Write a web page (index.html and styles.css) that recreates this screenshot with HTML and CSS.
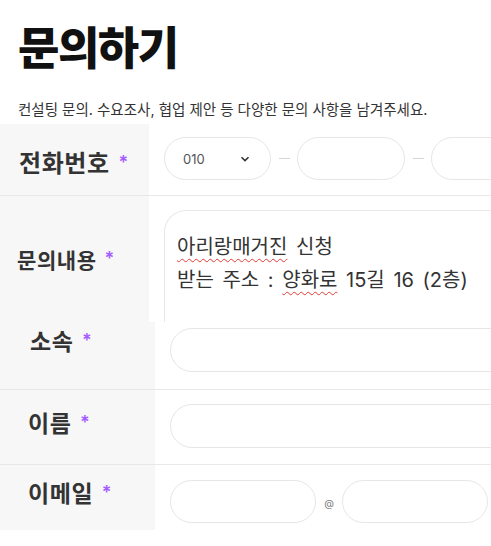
FILE: index.html
```html
<!DOCTYPE html>
<html lang="ko">
<head>
    <meta charset="UTF-8">
    <meta name="viewport" content="width=device-width, initial-scale=1.0">
    <title>문의하기</title>
    <link rel="stylesheet" href="styles.css">
</head>
<body>
    <div class="page-head">
        <h1>문의하기</h1>
        <p class="lead">컨설팅 문의. 수요조사, 협업 제안 등 다양한 문의 사항을 남겨주세요.</p>
    </div>

    <div class="form">
        <div class="row row-phone">
            <div class="label">전화번호 <span class="req">*</span></div>
            <div class="field">
                <div class="pill select">
                    <span>010</span>
                    <svg width="10" height="6" viewBox="0 0 10 6"><path d="M1.5 1.2 L5 4.6 L8.5 1.2" fill="none" stroke="#333" stroke-width="1.6"/></svg>
                </div>
                <span class="dash"></span>
                <div class="pill phone-part"></div>
                <span class="dash"></span>
                <div class="pill phone-part"></div>
            </div>
        </div>

        <div class="row row-message">
            <div class="label">문의내용 <span class="req">*</span></div>
            <div class="field">
                <div class="textarea">
                    <div><span class="typo">아리랑매거진</span> 신청</div>
                    <div>받는 주소 : <span class="typo">양화로</span> 15길 16 (2층)</div>
                </div>
            </div>
        </div>

        <div class="row row-org">
            <div class="label">소속 <span class="req">*</span></div>
            <div class="field">
                <div class="pill wide"></div>
            </div>
        </div>

        <div class="row row-name">
            <div class="label">이름 <span class="req">*</span></div>
            <div class="field">
                <div class="pill wide"></div>
            </div>
        </div>

        <div class="row row-mail">
            <div class="label">이메일 <span class="req">*</span></div>
            <div class="field">
                <div class="pill mail-part"></div>
                <span class="at">@</span>
                <div class="pill mail-part"></div>
            </div>
        </div>
    </div>
</body>
</html>
```

FILE: styles.css
```css
body {
    margin: 0;
    background: #fff;
    color: #333;
    font-family: Inter, "Noto Sans CJK KR", sans-serif;
    overflow: hidden;
}
.page-head {
    padding: 22px 0 0 18px;
}
h1 {
    margin: 0;
    font-size: 45px;
    line-height: 54px;
    font-weight: 900;
    color: #111;
    letter-spacing: -1.5px;
}
.lead {
    margin: 24px 0 4px;
    font-size: 14.5px;
    line-height: 20px;
    letter-spacing: 0;
    color: #333;
}
.row {
    display: flex;
    border-bottom: 1px solid #e8e8e8;
}
.label {
    flex: 0 0 149px;
    background: #f7f7f7;
    box-sizing: border-box;
    font-size: 23px;
    line-height: 28px;
    font-weight: 600;
    letter-spacing: 0.6px;
    color: #333;
    white-space: nowrap;
}
.req {
    color: #a45cff;
    font-size: 18px;
    vertical-align: 3px;
    margin-left: 2px;
}
.field {
    display: flex;
    align-items: center;
    white-space: nowrap;
    box-sizing: border-box;
}
.pill {
    flex: none;
    box-sizing: border-box;
    height: 44px;
    border: 1px solid #e6e6e6;
    border-radius: 22px;
    background: #fff;
}

/* 전화번호 */
.row-phone {
    height: 71px;
}
.row-phone .label {
    padding: 24px 0 0 19px;
    font-size: 24px;
    line-height: 30px;
}
.row-phone .field {
    padding: 13px 0 0 15px;
    align-items: flex-start;
}
.select {
    width: 107px;
    height: 43px;
    display: flex;
    align-items: center;
    justify-content: space-between;
    padding: 0 20px 0 18px;
    font-size: 13px;
    color: #555;
}
.phone-part {
    width: 108px;
    height: 43px;
}
.dash {
    flex: none;
    width: 11px;
    height: 1px;
    background: #d6d6d6;
    margin: 21px 7px 0 8px;
}

/* 문의내용 */
.row-message {
    height: 126px;
    border-bottom: none;
    overflow: hidden;
}
.row-message .label {
    padding: 50px 0 0 17px;
    font-size: 21px;
    line-height: 26px;
}
.row-message .field {
    align-items: flex-start;
    padding: 14px 0 0 15px;
}
.textarea {
    width: 400px;
    height: 160px;
    box-sizing: border-box;
    border: 1px solid #e8e8e8;
    border-right: none;
    border-bottom: none;
    border-radius: 22px 0 0 0;
    padding: 20px 0 0 12px;
    font-size: 20px;
    line-height: 33px;
    word-spacing: 3px;
    color: #333;
}
.typo {
    text-decoration: underline wavy #e53935;
    text-decoration-thickness: 1px;
    text-underline-offset: 4px;
}

/* 소속 / 이름 / 이메일 */
.row-org .label,
.row-name .label,
.row-mail .label {
    flex-basis: 155px;
}
.row-org .field,
.row-name .field,
.row-mail .field {
    align-items: flex-start;
    padding-left: 15px;
}
.wide {
    width: 400px;
}
.row-org {
    height: 67px;
}
.row-org .label {
    padding: 5px 0 0 30px;
}
.row-org .field {
    padding-top: 6px;
}
.row-name {
    height: 74px;
}
.row-name .label {
    padding: 19px 0 0 28px;
}
.row-name .field {
    padding-top: 14px;
}
.row-mail {
    height: 65px;
    border-bottom: none;
}
.row-mail .label {
    padding: 14px 0 0 28px;
}
.row-mail .field {
    padding-top: 15px;
}
.mail-part {
    width: 146px;
    height: 43px;
}
.at {
    flex: none;
    width: 26px;
    text-align: center;
    font-size: 10px;
    color: #777;
    padding-top: 17px;
}
```
